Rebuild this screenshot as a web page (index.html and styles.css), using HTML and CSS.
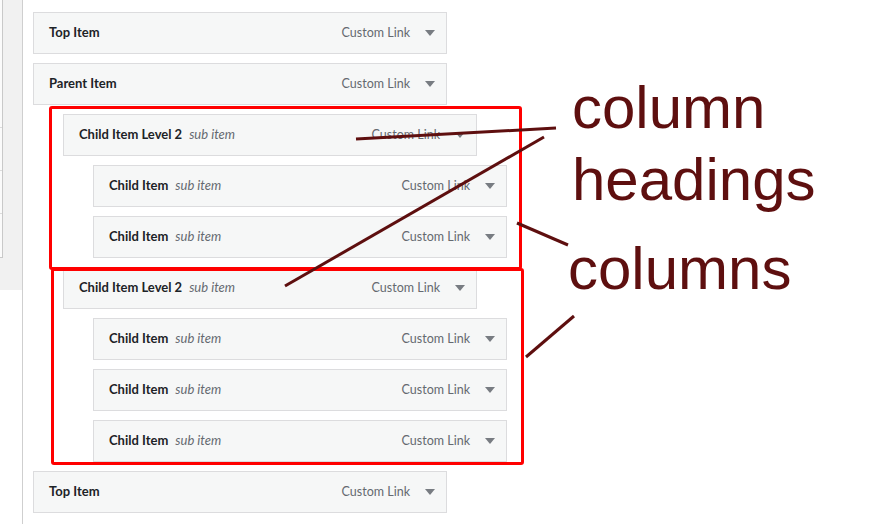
FILE: index.html
```html
<!DOCTYPE html>
<html lang="en">
<head>
<meta charset="utf-8">
<title>Menu columns</title>
<link rel="stylesheet" href="styles.css">
</head>
<body>
<div class="page">
  <aside class="sidebar">
    <div class="side-panel">
      <div class="side-box">
        <div class="side-sec side-sec-first"></div>
        <div class="side-sec"></div>
        <div class="side-sec"></div>
        <div class="side-sec side-sec-last"></div>
      </div>
    </div>
  </aside>
  <main class="menu">
    <ul class="menu-list">
      <li class="item depth-0"><span class="title">Top Item</span><span class="type">Custom Link</span><svg class="arrow" width="10" height="6" viewBox="0 0 10 6"><polygon points="0,0 10,0 5,6"/></svg></li>
      <li class="item depth-0"><span class="title">Parent Item</span><span class="type">Custom Link</span><svg class="arrow" width="10" height="6" viewBox="0 0 10 6"><polygon points="0,0 10,0 5,6"/></svg></li>
      <li class="item depth-1"><span class="title">Child Item Level 2</span><span class="sub">sub item</span><span class="type">Custom Link</span><svg class="arrow" width="10" height="6" viewBox="0 0 10 6"><polygon points="0,0 10,0 5,6"/></svg></li>
      <li class="item depth-2"><span class="title">Child Item</span><span class="sub">sub item</span><span class="type">Custom Link</span><svg class="arrow" width="10" height="6" viewBox="0 0 10 6"><polygon points="0,0 10,0 5,6"/></svg></li>
      <li class="item depth-2"><span class="title">Child Item</span><span class="sub">sub item</span><span class="type">Custom Link</span><svg class="arrow" width="10" height="6" viewBox="0 0 10 6"><polygon points="0,0 10,0 5,6"/></svg></li>
      <li class="item depth-1"><span class="title">Child Item Level 2</span><span class="sub">sub item</span><span class="type">Custom Link</span><svg class="arrow" width="10" height="6" viewBox="0 0 10 6"><polygon points="0,0 10,0 5,6"/></svg></li>
      <li class="item depth-2"><span class="title">Child Item</span><span class="sub">sub item</span><span class="type">Custom Link</span><svg class="arrow" width="10" height="6" viewBox="0 0 10 6"><polygon points="0,0 10,0 5,6"/></svg></li>
      <li class="item depth-2"><span class="title">Child Item</span><span class="sub">sub item</span><span class="type">Custom Link</span><svg class="arrow" width="10" height="6" viewBox="0 0 10 6"><polygon points="0,0 10,0 5,6"/></svg></li>
      <li class="item depth-2"><span class="title">Child Item</span><span class="sub">sub item</span><span class="type">Custom Link</span><svg class="arrow" width="10" height="6" viewBox="0 0 10 6"><polygon points="0,0 10,0 5,6"/></svg></li>
      <li class="item depth-0"><span class="title">Top Item</span><span class="type">Custom Link</span><svg class="arrow" width="10" height="6" viewBox="0 0 10 6"><polygon points="0,0 10,0 5,6"/></svg></li>
    </ul>
  </main>

  <div class="mark mark-one"></div>
  <div class="mark mark-two"></div>

  <svg class="pointers" width="883" height="524" viewBox="0 0 883 524">
    <line x1="356" y1="139" x2="556" y2="128"/>
    <line x1="285" y1="286" x2="544" y2="137"/>
    <line x1="517" y1="223" x2="568" y2="245"/>
    <line x1="526" y1="357" x2="574" y2="316"/>
  </svg>

  <div class="note note-headings">column<br>headings</div>
  <div class="note note-columns">columns</div>
</div>
</body>
</html>
```

FILE: styles.css
```css
* {
  box-sizing: border-box;
}

html, body {
  margin: 0;
  padding: 0;
  background: #ffffff;
}

.page {
  position: relative;
  display: flex;
  width: 883px;
  height: 524px;
  overflow: hidden;
  font-family: Lato, "Noto Sans", sans-serif;
}

.sidebar {
  width: 23px;
  flex: 0 0 23px;
  border-right: 1px solid #cfcfcf;
}

.side-panel {
  height: 290px;
  background: #f1f1f1;
}

.side-box {
  width: 3px;
  height: 258px;
  background: #fbfbfb;
  border-right: 1px solid #c9c9c9;
  border-bottom: 1px solid #c9c9c9;
  display: flex;
  flex-direction: column;
}

.side-sec {
  height: 43px;
  border-bottom: 1px solid #dcdcdc;
}

.side-sec-first {
  height: 128px;
}

.side-sec-last {
  flex: 1;
  border-bottom: none;
}

.menu {
  padding: 12px 0 0 10px;
}

.menu-list {
  list-style: none;
  margin: 0;
  padding: 0;
}

.item {
  display: flex;
  align-items: center;
  width: 414px;
  height: 42px;
  margin-bottom: 9px;
  padding: 0 11px 2px 15px;
  background: #f6f7f7;
  border: 1px solid #dcdcde;
  font-size: 13px;
}

.depth-1 {
  margin-left: 30px;
}

.depth-2 {
  margin-left: 60px;
}

.title {
  font-weight: 700;
  color: #1d2327;
}

.sub {
  margin-left: 7px;
  font-style: italic;
  color: #646970;
}

.type {
  margin-left: auto;
  margin-right: 15px;
  font-size: 12.5px;
  color: #646970;
}

.arrow {
  fill: #787c82;
  display: block;
  margin-top: 1px;
}

.mark {
  position: absolute;
  border: 3px solid #ff0000;
  border-radius: 3px;
}

.mark-one {
  left: 49px;
  top: 106px;
  width: 473px;
  height: 164px;
}

.mark-two {
  left: 51px;
  top: 268px;
  width: 473px;
  height: 197px;
}

.pointers {
  position: absolute;
  left: 0;
  top: 0;
  pointer-events: none;
}

.pointers line {
  stroke: #5e0f0f;
  stroke-width: 3;
}

.note {
  position: absolute;
  font-family: "Liberation Sans", Arial, sans-serif;
  font-size: 60px;
  line-height: 72px;
  color: #5e0f0f;
}

.note-headings {
  left: 572px;
  top: 72px;
}

.note-columns {
  left: 568px;
  top: 233px;
}
```
